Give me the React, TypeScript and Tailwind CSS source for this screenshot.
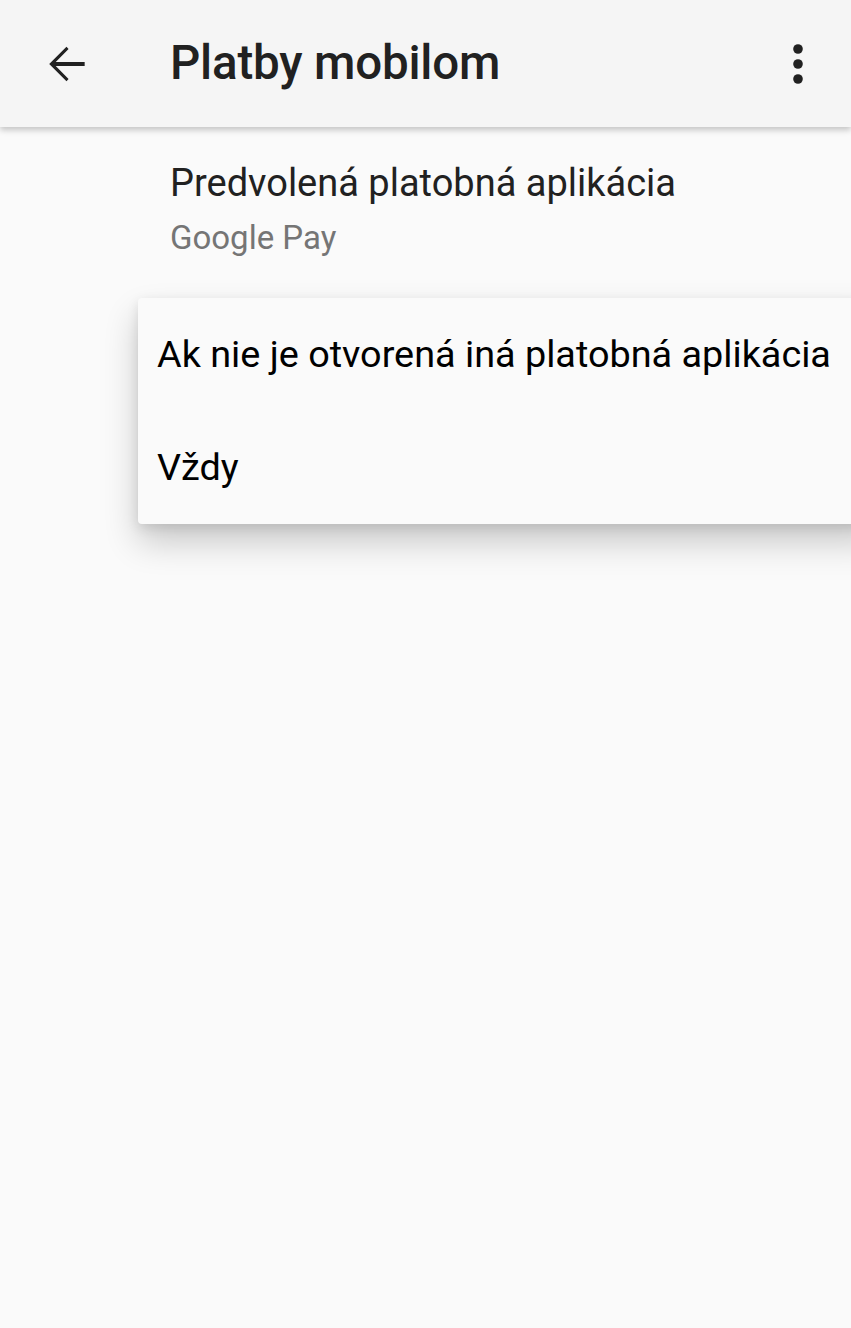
export default function App() {
  return (
    <div
      className="relative min-h-[1328px] w-[851px] overflow-hidden bg-[#fafafa] text-[#212121]"
      style={{ fontFamily: "Roboto, 'Noto Sans', sans-serif" }}
    >
      <header className="relative z-10 flex h-[127px] items-center bg-[#f5f5f5] shadow-[0_3px_6px_rgba(0,0,0,0.22)]">
        <button className="ml-[38px] flex h-[56px] w-[56px] items-center justify-center">
          <svg width="56" height="56" viewBox="0 0 24 24" fill="#212121">
            <path d="M20 11.1H7.6l5.5-5.5L12.2 4.6 4.8 12l7.4 7.4.9-1-5.5-5.5H20v-1.8z" />
          </svg>
        </button>
        <h1 className="ml-[76px] text-[47.5px] font-medium tracking-[-0.2px] text-[#212121]">Platby mobilom</h1>
        <button className="ml-auto mr-[29px] flex h-[48px] w-[48px] items-center justify-center">
          <svg width="48" height="48" viewBox="0 0 24 24" fill="#212121">
            <circle cx="12" cy="4.5" r="2.4" />
            <circle cx="12" cy="12" r="2.4" />
            <circle cx="12" cy="19.5" r="2.4" />
          </svg>
        </button>
      </header>

      <div className="pl-[170px] pt-[33px]">
        <p className="text-[38px] leading-[46px] text-[#212121]">Predvolená platobná aplikácia</p>
        <p className="mt-[12px] text-[33px] leading-[40px] text-[#757575]">Google Pay</p>
      </div>

      <div className="absolute left-[138px] top-[298px] w-[740px] rounded-[4px] bg-[#fafafa] shadow-[0_18px_34px_rgba(0,0,0,0.2),0_4px_12px_rgba(0,0,0,0.1)]">
        <div className="flex h-[113px] items-center pl-[19px] text-[37.8px] text-black">
          Ak nie je otvorená iná platobná aplikácia
        </div>
        <div className="flex h-[113px] items-center pl-[19px] text-[37.8px] text-black">Vždy</div>
      </div>
    </div>
  );
}
